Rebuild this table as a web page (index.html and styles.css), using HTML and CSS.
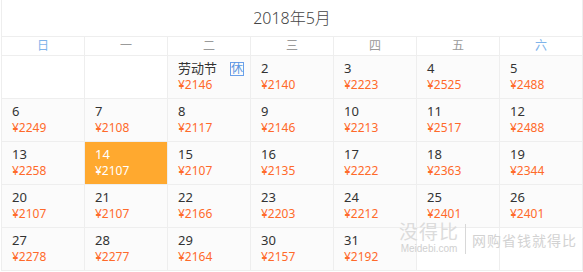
FILE: index.html
```html
<!DOCTYPE html>
<html lang="zh-CN">
<head>
<meta charset="utf-8">
<title>2018年5月</title>
<link rel="stylesheet" href="styles.css">
</head>
<body>
<div class="cal">
  <div class="title">2018年5月</div>
  <div class="row head">
    <div class="wd weekend">日</div>
    <div class="wd">一</div>
    <div class="wd">二</div>
    <div class="wd">三</div>
    <div class="wd">四</div>
    <div class="wd">五</div>
    <div class="wd weekend">六</div>
  </div>
  <div class="row">
    <div class="cell empty"></div>
    <div class="cell empty"></div>
    <div class="cell"><div class="day">劳动节<span class="rest">休</span></div><div class="price">¥2146</div></div>
    <div class="cell"><div class="day">2</div><div class="price">¥2140</div></div>
    <div class="cell"><div class="day">3</div><div class="price">¥2223</div></div>
    <div class="cell"><div class="day">4</div><div class="price">¥2525</div></div>
    <div class="cell"><div class="day">5</div><div class="price">¥2488</div></div>
  </div>
  <div class="row">
    <div class="cell"><div class="day">6</div><div class="price">¥2249</div></div>
    <div class="cell"><div class="day">7</div><div class="price">¥2108</div></div>
    <div class="cell"><div class="day">8</div><div class="price">¥2117</div></div>
    <div class="cell"><div class="day">9</div><div class="price">¥2146</div></div>
    <div class="cell"><div class="day">10</div><div class="price">¥2213</div></div>
    <div class="cell"><div class="day">11</div><div class="price">¥2517</div></div>
    <div class="cell"><div class="day">12</div><div class="price">¥2488</div></div>
  </div>
  <div class="row">
    <div class="cell"><div class="day">13</div><div class="price">¥2258</div></div>
    <div class="cell selected"><div class="day">14</div><div class="price">¥2107</div></div>
    <div class="cell"><div class="day">15</div><div class="price">¥2107</div></div>
    <div class="cell"><div class="day">16</div><div class="price">¥2135</div></div>
    <div class="cell"><div class="day">17</div><div class="price">¥2222</div></div>
    <div class="cell"><div class="day">18</div><div class="price">¥2363</div></div>
    <div class="cell"><div class="day">19</div><div class="price">¥2344</div></div>
  </div>
  <div class="row">
    <div class="cell"><div class="day">20</div><div class="price">¥2107</div></div>
    <div class="cell"><div class="day">21</div><div class="price">¥2107</div></div>
    <div class="cell"><div class="day">22</div><div class="price">¥2166</div></div>
    <div class="cell"><div class="day">23</div><div class="price">¥2203</div></div>
    <div class="cell"><div class="day">24</div><div class="price">¥2212</div></div>
    <div class="cell"><div class="day">25</div><div class="price">¥2401</div></div>
    <div class="cell"><div class="day">26</div><div class="price">¥2401</div></div>
  </div>
  <div class="row">
    <div class="cell"><div class="day">27</div><div class="price">¥2278</div></div>
    <div class="cell"><div class="day">28</div><div class="price">¥2277</div></div>
    <div class="cell"><div class="day">29</div><div class="price">¥2164</div></div>
    <div class="cell"><div class="day">30</div><div class="price">¥2157</div></div>
    <div class="cell"><div class="day">31</div><div class="price">¥2192</div></div>
    <div class="cell empty"></div>
    <div class="cell empty"></div>
  </div>
  <div class="watermark">
    <div class="wm-brand">
      <div class="wm-big">没得比</div>
      <div class="wm-small">Meidebi.com</div>
    </div>
    <div class="wm-sep"></div>
    <div class="wm-slogan">网购省钱就得比</div>
  </div>
</div>
</body>
</html>
```
FILE: styles.css
```css
html, body {
  margin: 0;
  padding: 0;
  background: #fff;
}
body {
  font-family: "Noto Sans", "Noto Sans CJK SC", sans-serif;
  color: #333;
}
.cal {
  position: relative;
  margin-left: 1px;
  width: 582px;
  border-left: 1px solid #eeeeee;
  box-sizing: border-box;
}
.title {
  height: 37px;
  box-sizing: border-box;
  border-bottom: 1px solid #eeeeee;
  border-right: 1px solid #eeeeee;
  text-align: center;
  font-size: 16px;
  line-height: 36px;
  color: #444;
  font-weight: 300;
}
.row {
  display: grid;
  grid-template-columns: repeat(7, 83px);
}
.wd {
  height: 19px;
  box-sizing: border-box;
  border-right: 1px solid #eeeeee;
  border-bottom: 1px solid #eeeeee;
  text-align: center;
  font-size: 12px;
  line-height: 18px;
  color: #9a9a9a;
}
.wd.weekend {
  color: #7eb3ea;
}
.cell {
  height: 43px;
  box-sizing: border-box;
  border-right: 1px solid #eeeeee;
  border-bottom: 1px solid #eeeeee;
  background: #fbfbfb;
  padding: 4px 6px 0 10px;
}
.cell.empty {
  background: #fff;
}
.cell.selected {
  background: #ffa92f;
}
.day {
  display: flex;
  justify-content: space-between;
  align-items: center;
  font-size: 13px;
  line-height: 17px;
  color: #333;
}
.price {
  width: fit-content;
  font-size: 12px;
  line-height: 16px;
  color: #ff6a2a;
}
.selected .day,
.selected .price {
  color: #fff;
}
.rest {
  display: inline-block;
  width: 14px;
  height: 14px;
  box-sizing: border-box;
  border: 1px solid #6aa0ea;
  color: #5b96e0;
  font-size: 12px;
  line-height: 12px;
  text-align: center;
}
.watermark {
  position: absolute;
  left: 397px;
  top: 223px;
  display: flex;
  align-items: center;
  gap: 6px;
  pointer-events: none;
}
.wm-brand {
  display: flex;
  flex-direction: column;
  align-items: center;
}
.wm-big {
  font-size: 19px;
  line-height: 19px;
  color: #dcdcdc;
  letter-spacing: 1px;
}
.wm-small {
  margin-top: 1px;
  font-family: "Liberation Sans", sans-serif;
  font-size: 10px;
  line-height: 11px;
  color: #d0d0d0;
}
.wm-sep {
  width: 1px;
  height: 30px;
  background: #d8d8d8;
}
.wm-slogan {
  font-size: 14px;
  line-height: 16px;
  color: #d2d2d2;
  letter-spacing: 1px;
  margin-top: 4px;
}
```
